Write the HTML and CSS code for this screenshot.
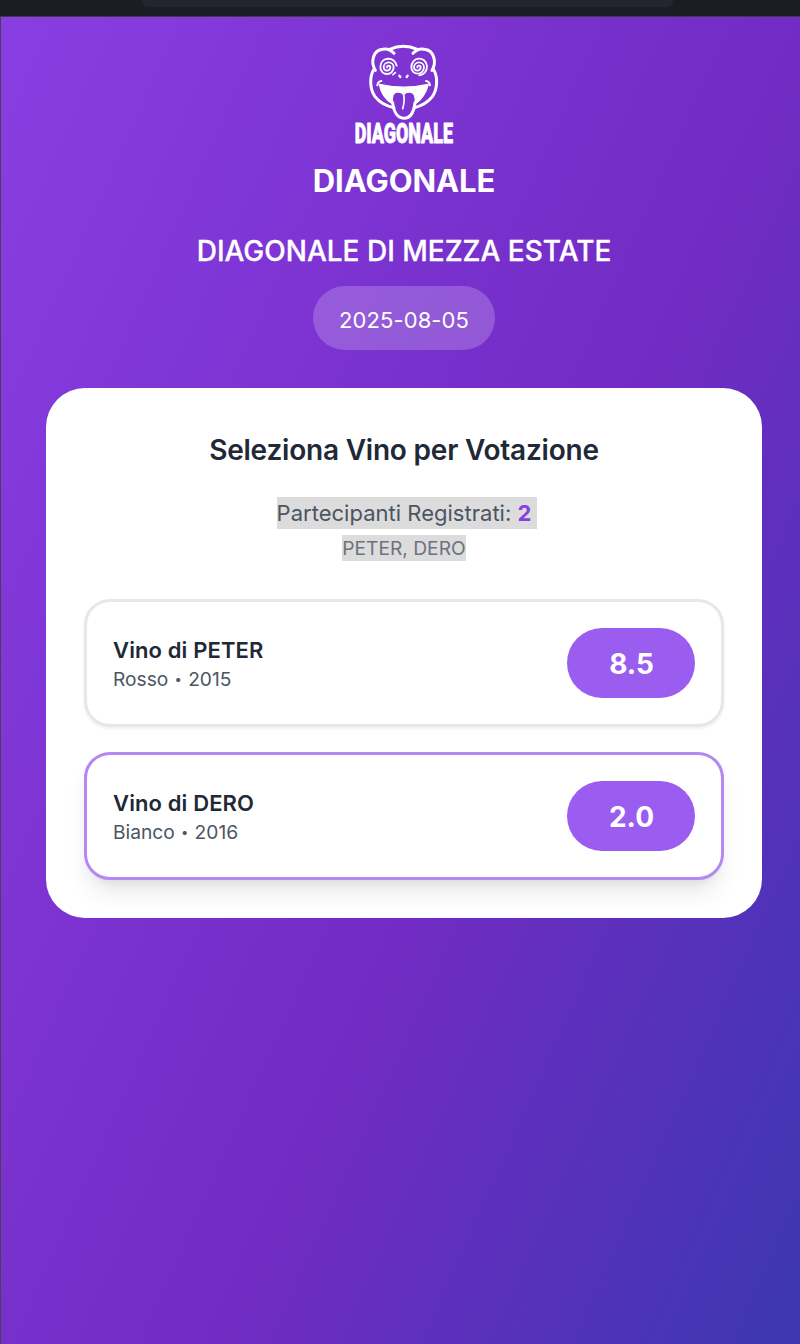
FILE: index.html
```
<!DOCTYPE html>
<html lang="it">
<head>
<meta charset="utf-8">
<title>Diagonale</title>
<link rel="stylesheet" href="styles.css">
</head>
<body>
<div class="toolbar"><div class="address"></div></div>
<main class="page">
  <header class="header">
    <svg class="logo" viewBox="0 0 360 345" fill="none" stroke="#fff" stroke-width="9" stroke-linecap="round" stroke-linejoin="round">
      <path d="M91 106C76 80 84 46 113 43Q132 39 147 55M134 43Q175 24 217 43M204 55Q219 39 238 43C267 46 276 80 261 106"/>
      <path d="M86 104C74 124 73 160 90 185C104 203 122 213 147 218M266 104C278 124 279 160 262 185C248 203 230 213 207 218"/>
      <path stroke-width="5.500" d="M126 97A5 5 0 0 1 136 97A10 10 0 0 1 116 97A15 15 0 0 1 146 97A20 20 0 0 1 106 97C106 63 151 64 155 92M151 113L144 119"/>
      <path stroke-width="5.500" d="M217 97A5 5 0 0 1 227 97A10 10 0 0 1 207 97A15 15 0 0 1 237 97A19 19 0 0 1 199 97C199 64 242 62 246 93C247 109 235 120 223 121"/>
      <path stroke-width="7" d="M163 122L166 126M188 122L185 126"/>
      <path stroke-width="6" d="M97 151Q99 139 109 138M255 151Q253 139 243 138"/>
      <path fill="#fff" stroke-width="4" d="M103 148Q176 165 250 148C243 174 229 195 210 207C214 185 207 171 195 171Q182 170 176 179Q170 170 157 171C144 171 139 186 143 207C121 194 108 174 103 148Z"/>
      <path d="M143 203C145 224 154 249 177 250C199 250 209 224 210 203"/>
      <path stroke-width="5" d="M176 180Q180 197 173 221"/>
      <text class="logo-text" transform="translate(29 323) scale(.604 1)" textLength="488" lengthAdjust="spacingAndGlyphs">DIAGONALE</text>
    </svg>
    <h1 class="brand">DIAGONALE</h1>
    <h2 class="event">DIAGONALE DI MEZZA ESTATE</h2>
    <div class="date">2025-08-05</div>
  </header>
  <section class="card">
    <h3 class="card-title">Seleziona Vino per Votazione</h3>
    <div class="participants"><span class="mark">Partecipanti Registrati: <b class="count">2</b></span></div>
    <div class="names"><span class="mark">PETER, DERO</span></div>
    <div class="wines">
      <article class="wine">
        <div><div class="wine-name">Vino di PETER</div><div class="wine-info">Rosso <span class="dot">•</span> 2015</div></div>
        <div class="score">8.5</div>
      </article>
      <article class="wine wine-active">
        <div><div class="wine-name">Vino di DERO</div><div class="wine-info">Bianco <span class="dot">•</span> 2016</div></div>
        <div class="score">2.0</div>
      </article>
    </div>
  </section>
</main>
</body>
</html>
```
FILE: styles.css
```
* { box-sizing: border-box; }
body { margin: 0; height: 1344px; overflow: hidden; background: #1a1d23; font-family: Inter, "Liberation Sans", sans-serif; }
.toolbar { height: 17px; background: #1a1d24; border-bottom: 1px solid #3d3d42; }
.address { width: 531px; height: 7px; margin-left: 142px; background: #23262e; border-radius: 0 0 6px 6px; }
.page { height: 1327px; padding: 18px 38px 0 45px; border-left: 1px solid #494051; background: linear-gradient(to bottom right, #893ee3, #722bc4 50%, #273ca9) 0 0 / 806px 1800px no-repeat; }
.header { display: flex; flex-direction: column; align-items: center; color: #fff; }
.logo { width: 120px; height: 115px; margin-left: 2px; }
.logo-text { font: 900 85px Roboto, sans-serif; fill: #fff; stroke: #fff; stroke-width: 2.500px; }
h1, h2, h3 { margin: 0; }
.brand { margin-top: 10px; height: 42px; line-height: 42px; font-size: 31px; font-weight: 700; letter-spacing: -.1px; }
.event { margin-top: 28px; height: 42px; line-height: 42px; font-size: 28px; font-weight: 500; white-space: nowrap; -webkit-text-stroke: .3px #fff; }
.date { margin-top: 14px; width: 182px; height: 64px; line-height: 68px; text-align: center; border-radius: 32px; background: rgba(255,255,255,.2); font-size: 22px; letter-spacing: .08px; color: #fff; }
.card { height: 530px; margin-top: 38px; padding: 38px; border-radius: 39px; background: #fff; text-align: center; }
.card-title { height: 48px; line-height: 48px; font-size: 28px; font-weight: 600; letter-spacing: -.21px; color: #212936; white-space: nowrap; }
.participants { height: 32px; margin-top: 23px; line-height: 32px; font-size: 22px; letter-spacing: .02px; color: #4d5562; white-space: nowrap; }
.participants .mark { height: 32px; padding-right: 6px; margin-right: -6px; }
.mark { display: inline-block; background: #dcdcdc; }
.count { font-weight: 700; color: #893ee3; }
.names { height: 26px; margin-top: 6px; line-height: 26px; font-size: 19.200px; color: #6d727f; }
.wines { display: grid; gap: 25px; margin-top: 38px; }
.wine { display: flex; justify-content: space-between; align-items: center; height: 128px; padding: 0 26px; border: 3px solid #e5e7eb; border-radius: 26px; text-align: left; box-shadow: 0 2px 3px rgba(0,0,0,.06); }
.wine-active { border-color: #b686f4; box-shadow: 0 16px 24px -5px rgba(0,0,0,.1), 0 6px 10px -6px rgba(0,0,0,.1); }
.wine-name { height: 30px; margin-top: 2px; line-height: 30px; font-size: 22px; font-weight: 600; letter-spacing: .12px; color: #212936; }
.wine-info { height: 28px; line-height: 28px; font-size: 19.200px; color: #4d5562; }
.dot { display: inline-block; width: 9px; font-size: 13px; line-height: 12px; vertical-align: 2px; text-align: center; }
.score { width: 128px; height: 70px; line-height: 72px; border-radius: 35px; text-align: center; background: #9b5cf0; color: #fff; font-size: 28px; font-weight: 700; padding-left: 1px; }
```
